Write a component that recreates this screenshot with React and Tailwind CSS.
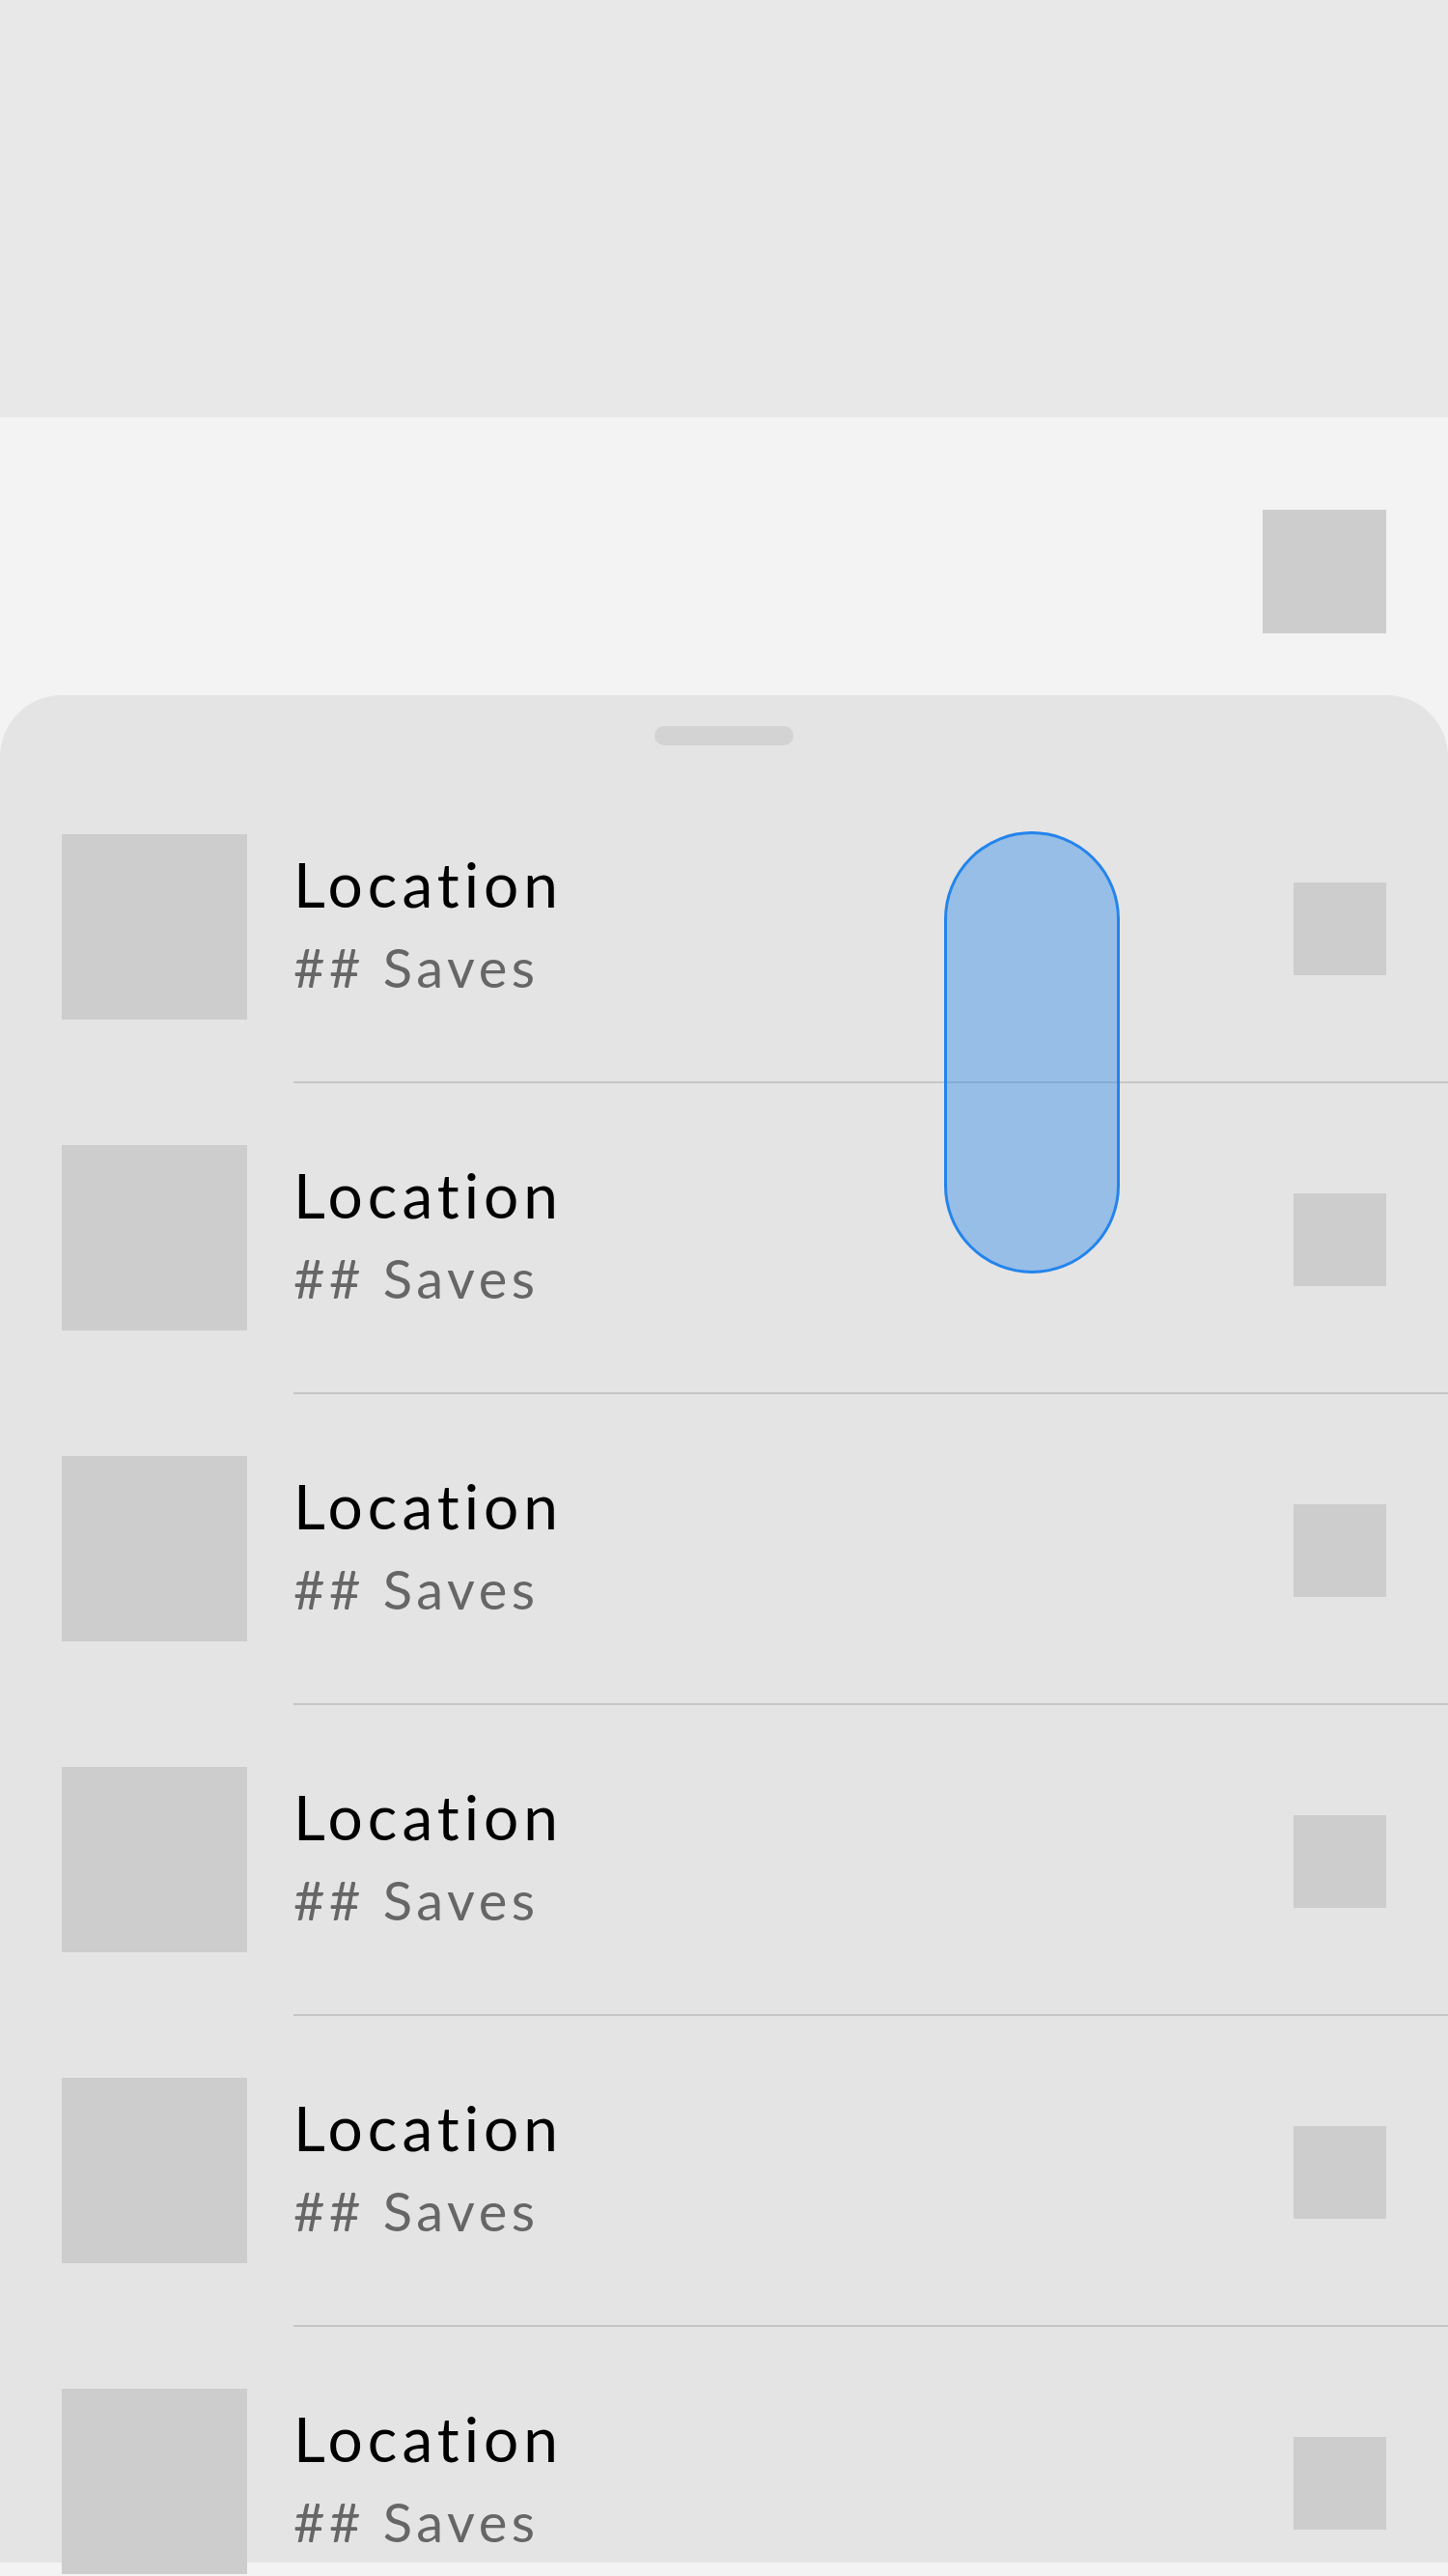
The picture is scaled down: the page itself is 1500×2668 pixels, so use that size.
const rows = [1, 2, 3, 4, 5, 6]

function Row() {
  return (
    <div className="flex">
      <div className="shrink-0 pl-[64px] pr-[48px] pt-[64px]">
        <div className="h-[192px] w-[192px] bg-[#cdcdcd]" />
      </div>
      <div className="flex h-[322px] flex-1 items-center border-b-2 border-[#c6c6c6] pr-[64px]">
        <div className="flex-1 pt-[4px] [font-variant-ligatures:none]">
          <div className="text-[64px] leading-[80px] tracking-[5px] text-black">Location</div>
          <div className="text-[56px] leading-[92px] tracking-[4.5px] text-[#666666]">## Saves</div>
        </div>
        <div className="mt-[4px] h-[96px] w-[96px] bg-[#cdcdcd]" />
      </div>
    </div>
  )
}

export default function App() {
  return (
    <div className="flex h-[2668px] w-full flex-col overflow-hidden bg-[#f3f3f3] font-['Lato',_'Liberation_Sans',_sans-serif]">
      <div className="h-[432px] shrink-0 bg-[#e8e8e8]" />

      <div className="flex h-[288px] shrink-0 justify-end pr-[64px] pt-[96px]">
        <div className="h-[128px] w-[128px] bg-[#cdcdcd]" />
      </div>

      <div className="relative h-[1934px] shrink-0 rounded-t-[64px] bg-[#e4e4e4]">
        <div className="flex justify-center pt-[32px] pb-[28px]">
          <div className="h-[20px] w-[144px] rounded-full bg-[#d3d3d3]" />
        </div>
        {rows.map(r => <Row key={r} />)}

        {/* drag indicator overlay */}
        <div className="absolute left-[978px] top-[141px] h-[458px] w-[182px] rounded-full border-[3px] border-[#2484ec] bg-[#2484ec]/40" />
      </div>
    </div>
  )
}
